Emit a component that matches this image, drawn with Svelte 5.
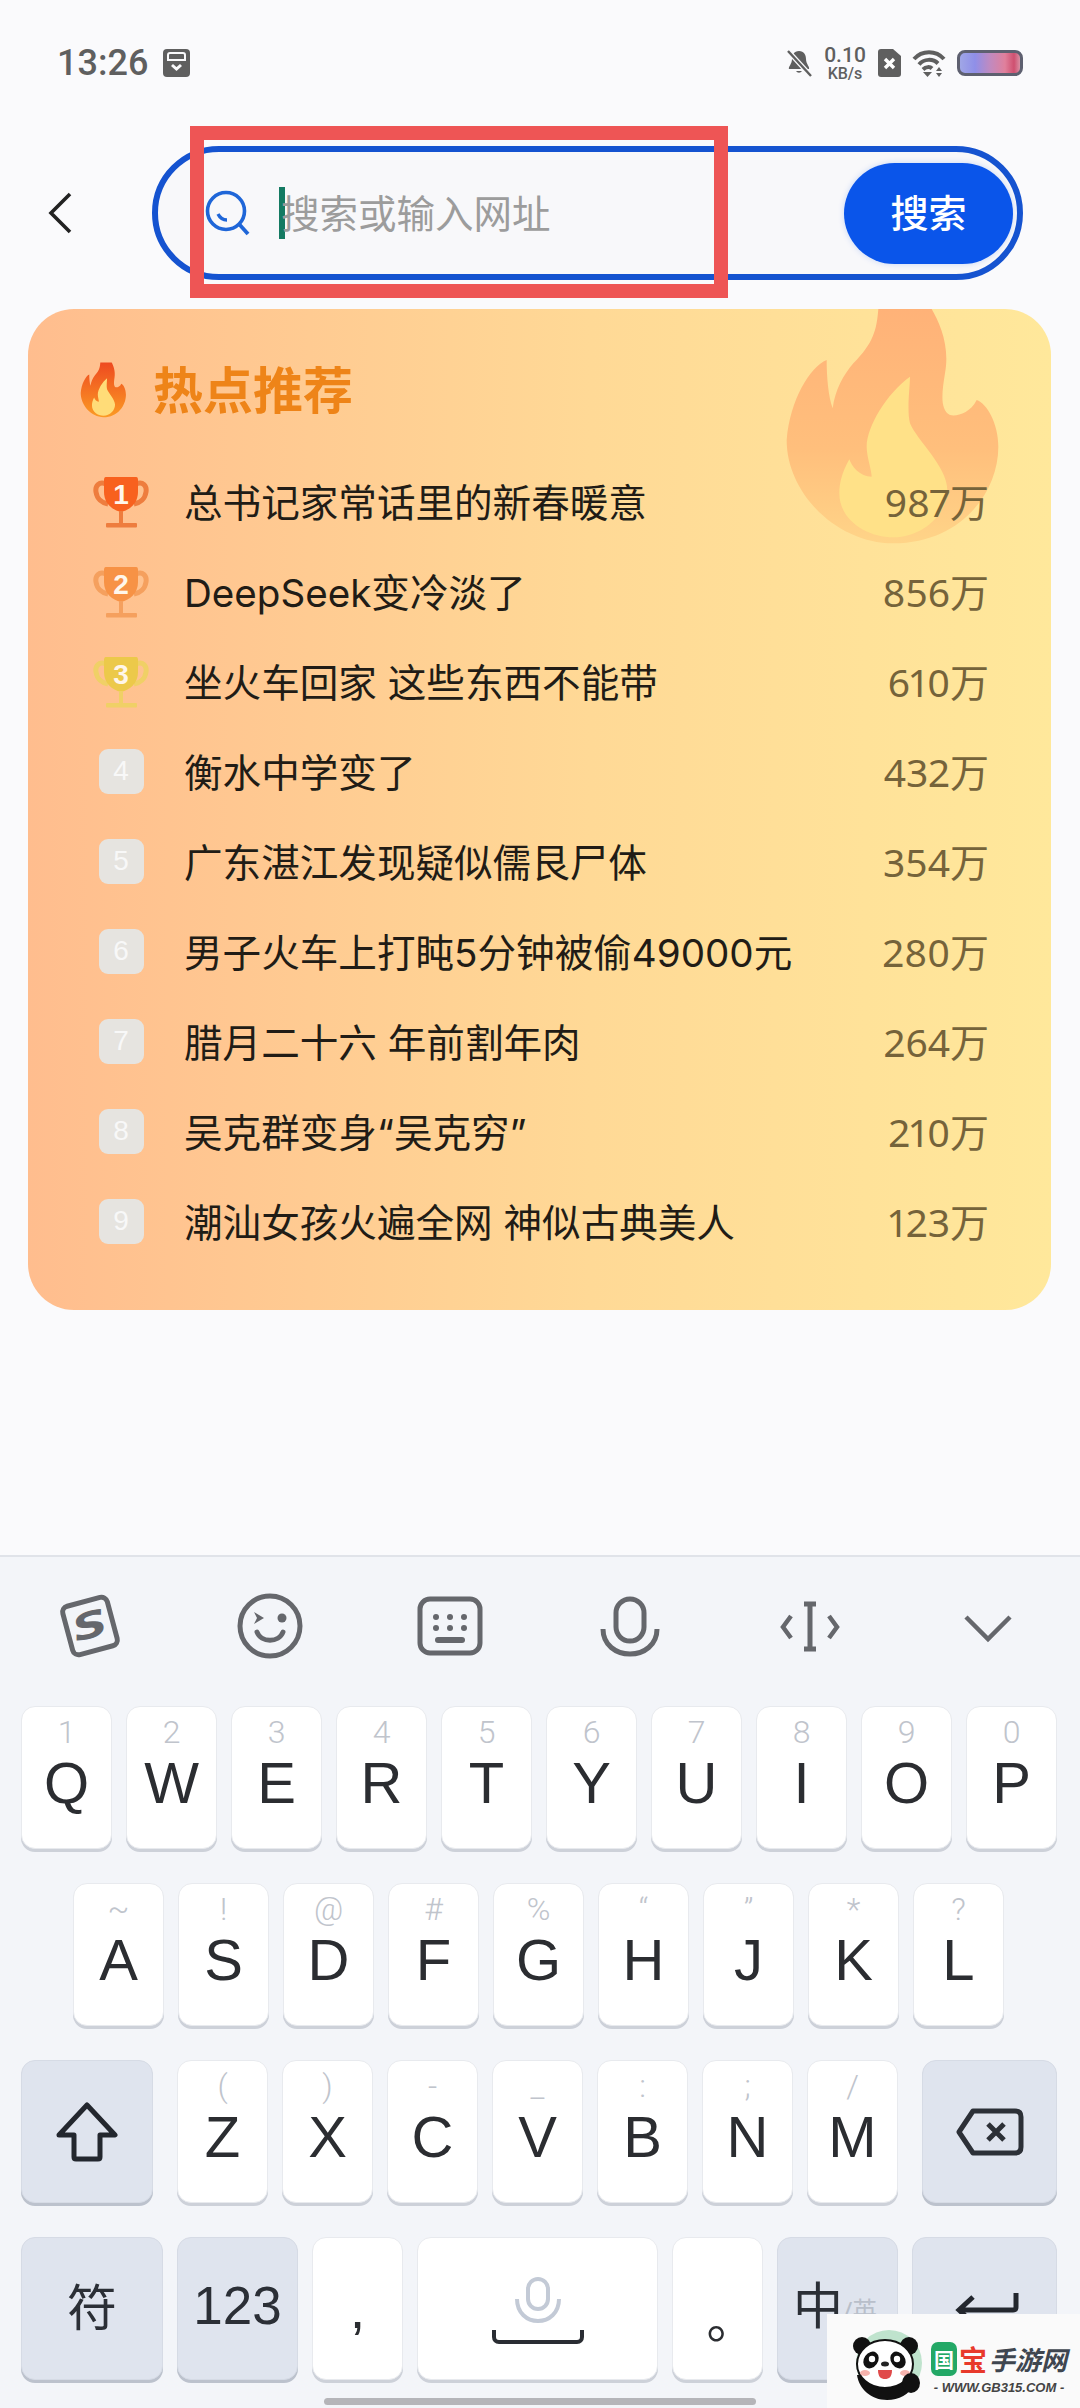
<script>
	const flameOuter = "M355 27C350 90 340 130 280 190C250 225 225 270 218 325C205 290 200 230 200 180C150 200 90 300 80 420C80 580 230 730 400 730C600 730 715 580 715 440C715 370 680 310 650 300C630 340 590 350 570 345C540 330 545 280 555 220C570 140 540 70 515 27Z";
	const flameInner = "M450 230C380 280 320 380 320 440C320 470 335 510 335 530C300 530 275 500 268 478C245 520 238 550 238 580C238 660 320 712 400 712C490 712 562 640 562 570C562 500 470 420 450 370C440 330 450 260 450 230Z";

	const news = [
		{ title: "总书记家常话里的新春暖意", count: "987万", cup: "#f8611e", handle: "#ee7d3e" },
		{ title: "DeepSeek变冷淡了", count: "856万", cup: "#f79245", handle: "#f5a05e" },
		{ title: "坐火车回家 这些东西不能带", count: "610万", cup: "#ecc94a", handle: "#f0d066" },
		{ title: "衡水中学变了", count: "432万" },
		{ title: "广东湛江发现疑似儒艮尸体", count: "354万" },
		{ title: "男子火车上打盹5分钟被偷49000元", count: "280万" },
		{ title: "腊月二十六 年前割年肉", count: "264万" },
		{ title: "吴克群变身“吴克穷”", count: "210万" },
		{ title: "潮汕女孩火遍全网 神似古典美人", count: "123万" },
	];

	const row1 = [["1","Q"],["2","W"],["3","E"],["4","R"],["5","T"],["6","Y"],["7","U"],["8","I"],["9","O"],["0","P"]];
	const row2 = [["~","A"],["!","S"],["@","D"],["#","F"],["%","G"],["“","H"],["”","J"],["*","K"],["?","L"]];
	const row3 = [["(","Z"],[")","X"],["-","C"],["_","V"],[":","B"],[";","N"],["/","M"]];
</script>

{#snippet letterKey(hint, letter)}
	<div class="key">
		<span class="hint">{hint}</span>
		<span class="letter">{letter}</span>
	</div>
{/snippet}

<div class="page">
	<header class="status">
		<div class="status-left">
			<span class="time">13:26</span>
			<svg class="st-box" viewBox="0 0 27 28">
				<path d="M4 0H23A4 4 0 0 1 27 4V24A4 4 0 0 1 23 28H4A4 4 0 0 1 0 24V4A4 4 0 0 1 4 0Z" fill="#5f5f5f" />
				<path d="M5 11V6A2 2 0 0 1 7 4H20A2 2 0 0 1 22 6V11" fill="none" stroke="#fafafc" stroke-width="2" />
				<path d="M4 11H23" stroke="#fafafc" stroke-width="2" />
				<path d="M9 16L13.5 20L18 16" fill="none" stroke="#fafafc" stroke-width="3" />
			</svg>
		</div>
		<div class="status-right">
			<svg class="st-bell" viewBox="0 0 25 27">
				<path d="M12 1C7 1 5 5 5 9C5 14 1 17 2 19H22C23 17 19 14 19 9C19 5 17 1 12 1ZM9 21A3.5 3.5 0 0 0 15 21Z" fill="#5f5f5f" />
				<path d="M1 1L24 26" stroke="#fafafc" stroke-width="5" />
				<path d="M1 1L24 26" stroke="#5f5f5f" stroke-width="2.4" />
			</svg>
			<div class="speed">
				<span class="speed-num">0.10</span>
				<span class="speed-unit">KB/s</span>
			</div>
			<svg class="st-sim" viewBox="0 0 23 28">
				<path d="M3 0H15L23 7V25A3 3 0 0 1 20 28H3A3 3 0 0 1 0 25V3A3 3 0 0 1 3 0Z" fill="#5f5f5f" />
				<path d="M7 10L16 19M16 10L7 19" stroke="#fff" stroke-width="3.400" />
			</svg>
			<svg class="st-wifi" viewBox="0 0 34 28">
				<g fill="none" stroke="#5f5f5f" stroke-width="4">
					<path d="M2 10C10 1 24 1 32 10" />
					<path d="M7 15.500C12 9.500 21 9.500 26 14.500" />
					<path d="M11 20.500C14 17.500 18 17.500 20 19.500" />
				</g>
				<path d="M11 23H20L15.500 28Z" fill="#5f5f5f" />
				<path d="M27 18L30 22H24ZM27 28L24 24H30Z" fill="#5f5f5f" />
			</svg>
			<div class="battery"></div>
		</div>
	</header>

	<div class="search-row">
		<svg class="back" viewBox="0 0 24 42">
			<path d="M22 2L3 21L22 40" fill="none" stroke="#222" stroke-width="3.600" />
		</svg>
		<div class="pill">
			<svg class="search-icon" viewBox="0 0 45 46">
				<circle cx="21" cy="21" r="18.500" fill="none" stroke="#1f66d8" stroke-width="3.600" />
				<path d="M34 34L43 44" stroke="#1f66d8" stroke-width="3.800" />
				<path d="M13 24C15 28 18 30 22 30" fill="none" stroke="#1f66d8" stroke-width="3.400" />
			</svg>
			<div class="caret"></div>
			<span class="placeholder">搜索或输入网址</span>
			<button class="search-btn"><span>搜索</span></button>
		</div>
	</div>

	<section class="card">
		<svg class="big-flame" viewBox="0 0 840 780">
			<defs>
				<linearGradient id="bf" x1="0" y1="0" x2="0" y2="1">
					<stop offset="0" stop-color="#ffb278" />
					<stop offset="0.6" stop-color="#ffbf7c" />
					<stop offset="1" stop-color="#ffd488" />
				</linearGradient>
			</defs>
			<path d={flameOuter} fill="url(#bf)" />
			<path d={flameInner} fill="#ffe188" />
		</svg>
		<div class="card-head">
			<svg class="small-flame" viewBox="70 20 660 720" preserveAspectRatio="none">
				<defs>
					<linearGradient id="fl" x1="0" y1="0" x2="0" y2="1">
						<stop offset="0" stop-color="#ee4a20" />
						<stop offset="1" stop-color="#fb9a24" />
					</linearGradient>
				</defs>
				<path d={flameOuter} fill="url(#fl)" />
				<path d={flameInner} fill="#ffdc78" />
			</svg>
			<h2>热点推荐</h2>
		</div>
		<ul class="list">
			{#each news as item, i (i)}
				<li>
					<div class="rank">
						{#if item.cup}
							<svg class="cup" viewBox="0 0 56 52">
								<path d="M13 7C6 4 2 9 3 15C4 22 9 26 15 27" fill="none" stroke={item.handle} stroke-width="5" />
								<path d="M43 7C50 4 54 9 53 15C52 22 47 26 41 27" fill="none" stroke={item.handle} stroke-width="5" />
								<path d="M13 0H43C45 0 45 2 45 4V15C45 26 37 33 28 35C19 33 11 26 11 15V4C11 2 11 0 13 0Z" fill={item.cup} />
								<path d="M26 34H30V46H26Z" fill={item.handle} />
								<rect x="13" y="46" width="31" height="4.500" rx="1" fill={item.handle} />
								<text x="28" y="27" text-anchor="middle" class="cup-num">{i + 1}</text>
							</svg>
						{:else}
							<span class="rank-box">{i + 1}</span>
						{/if}
					</div>
					<span class="title">{item.title}</span>
					<span class="count">{item.count}</span>
				</li>
			{/each}
		</ul>
	</section>

	<section class="keyboard">
		<div class="toolbar">
			<svg class="tool" viewBox="0 0 66 66">
				<g transform="rotate(-15 33 33)">
					<rect x="10" y="8" width="46" height="50" rx="6" fill="none" stroke="#65676c" stroke-width="5" />
					<text x="0" y="0" transform="translate(33 45) scale(1.35 1)" text-anchor="middle" class="logo-s">S</text>
				</g>
			</svg>
			<svg class="tool" viewBox="0 0 66 66">
				<g fill="none" stroke="#65676c">
					<circle cx="33" cy="33" r="30" stroke-width="5" />
					<path d="M20 39C24 50 42 50 46 39" stroke-width="5" stroke-linecap="round" />
				</g>
				<path d="M17 19L27 25L17 31L20 25Z" fill="#65676c" />
				<circle cx="45" cy="25" r="4.500" fill="#65676c" />
			</svg>
			<svg class="tool" viewBox="0 0 66 66">
				<rect x="3" y="6" width="60" height="54" rx="10" fill="none" stroke="#65676c" stroke-width="5" />
				<g fill="#65676c">
					<circle cx="19" cy="24" r="3" /><circle cx="33" cy="24" r="3" /><circle cx="47" cy="24" r="3" />
					<circle cx="19" cy="35" r="3" /><circle cx="33" cy="35" r="3" /><circle cx="47" cy="35" r="3" />
					<rect x="18" y="44" width="30" height="6" rx="3" />
				</g>
			</svg>
			<svg class="tool" viewBox="0 0 66 66">
				<g fill="none" stroke="#65676c" stroke-width="5">
					<rect x="19" y="6" width="28" height="42" rx="14" />
					<path d="M6 36C6 52 19 61 33 61C47 61 60 52 60 36" />
				</g>
			</svg>
			<svg class="tool" viewBox="0 0 66 66">
				<g fill="none" stroke="#65676c" stroke-width="4.500">
					<path d="M33 11V56M27 11H39M27 56H39" stroke-width="5" />
					<path d="M14 23L6 34L14 45M52 23L60 34L52 45" />
				</g>
			</svg>
			<svg class="tool" viewBox="0 0 66 66">
				<path d="M9 24L31 46L53 24" fill="none" stroke="#65676c" stroke-width="4.500" />
			</svg>
		</div>

		<div class="keys">
			<div class="row">
				{#each row1 as [h, l] (l)}
					{@render letterKey(h, l)}
				{/each}
			</div>
			<div class="row row-home">
				{#each row2 as [h, l] (l)}
					{@render letterKey(h, l)}
				{/each}
			</div>
			<div class="row">
				<div class="key fn shift">
					<svg class="shift-icon" viewBox="0 0 62 60">
						<path d="M31 3L59 33H44V55C44 57 43 57 42 57H20C19 57 18 57 18 55V33H3Z" fill="none" stroke="#23272e" stroke-width="5" stroke-linejoin="round" />
					</svg>
				</div>
				<div class="mid">
					{#each row3 as [h, l] (l)}
						{@render letterKey(h, l)}
					{/each}
				</div>
				<div class="key fn backspace">
					<svg class="bs-icon" viewBox="0 0 68 48">
						<path d="M17 3H59C63 3 65 5 65 9V39C65 43 63 45 59 45H17L3 24Z" fill="none" stroke="#2c3037" stroke-width="5" stroke-linejoin="round" />
						<path d="M32 16L48 32M48 16L32 32" stroke="#2c3037" stroke-width="5" />
					</svg>
				</div>
			</div>
			<div class="row">
				<div class="key fn w-fu"><span class="cjk">符</span></div>
				<div class="key fn w-num"><span class="num">123</span></div>
				<div class="key"><span class="comma">,</span></div>
				<div class="key w-space">
					<svg class="space-mic" viewBox="0 0 46 46">
						<g fill="none" stroke="#c3cad6" stroke-width="4">
							<rect x="13" y="2" width="20" height="30" rx="10" />
							<path d="M2 22C2 36 12 44 23 44C34 44 44 36 44 22" />
						</g>
					</svg>
					<svg class="space-bar" viewBox="0 0 92 14">
						<path d="M2 0V7C2 10 4 12 7 12H85C88 12 90 10 90 7V0" fill="none" stroke="#2a2d33" stroke-width="4" />
					</svg>
				</div>
				<div class="key"><span class="stop">。</span></div>
				<div class="key fn w-lang"><span class="cjk">中</span><span class="en">/英</span></div>
				<div class="key fn w-enter">
					<svg class="enter-icon" viewBox="0 0 64 44">
						<path d="M61 2V16C61 18 60 19 58 19H6M18 6L4 19L18 32" fill="none" stroke="#23272e" stroke-width="5" />
					</svg>
				</div>
			</div>
		</div>
		<div class="home-bar"></div>
	</section>

	<div class="annotation"></div>

	<aside class="watermark">
		<svg class="panda" viewBox="0 0 76 72">
			<circle cx="40" cy="34" r="33" fill="#bfe3cd" />
			<circle cx="13" cy="17" r="9" fill="#111" />
			<circle cx="60" cy="17" r="9" fill="#111" />
			<path d="M8 46C10 60 22 71 38 71C50 71 60 66 66 54L62 46Z" fill="#111" />
			<ellipse cx="36" cy="35" rx="28" ry="24" fill="#fff" stroke="#111" stroke-width="2" />
			<ellipse cx="22" cy="31" rx="7" ry="9" fill="#111" transform="rotate(35 22 31)" />
			<ellipse cx="49" cy="31" rx="7" ry="9" fill="#111" transform="rotate(-35 49 31)" />
			<circle cx="23" cy="30" r="3.200" fill="#fff" />
			<circle cx="48" cy="30" r="3.200" fill="#fff" />
			<ellipse cx="36" cy="35" rx="4" ry="2.500" fill="#222" />
			<path d="M29 41H43C43 48 40 50 36 50C32 50 29 48 29 41Z" fill="#e04a4a" />
			<ellipse cx="16" cy="44" rx="5" ry="3" fill="#f6b3ad" />
			<ellipse cx="56" cy="44" rx="5" ry="3" fill="#f6b3ad" />
			<ellipse cx="62" cy="54" rx="9" ry="10" fill="#111" />
		</svg>
		<div class="wm-text">
			<div class="wm-name">
				<span class="wm-guo">国</span>
				<span class="wm-bao">宝</span>
				<span class="wm-rest">手游网</span>
			</div>
			<div class="wm-url">- WWW.GB315.COM -</div>
		</div>
	</aside>
</div>

<style>
	:global(body) {
		margin: 0;
		background: #fafafc;
	}

	.page {
		position: relative;
		width: 1080px;
		height: 2408px;
		overflow: hidden;
		display: flex;
		flex-direction: column;
		background: #fafafc;
		font-family: "Noto Sans", "Noto Sans CJK SC", sans-serif;
	}

	.status {
		height: 126px;
		margin-bottom: 20px;
		flex: none;
		display: flex;
		align-items: center;
		justify-content: space-between;
		padding: 0 57px;
		box-sizing: border-box;
	}

	.status-left,
	.status-right {
		display: flex;
		align-items: center;
	}

	.time {
		font-family: Roboto, sans-serif;
		font-size: 36px;
		font-weight: 500;
		color: #5f5f5f;
		width: 106px;
	}

	.st-box {
		width: 27px;
		height: 28px;
	}

	.st-bell {
		width: 25px;
		height: 27px;
		margin-right: 12px;
	}

	.speed {
		display: flex;
		flex-direction: column;
		align-items: center;
		font-family: Roboto, sans-serif;
		font-weight: 500;
		color: #5f5f5f;
		width: 42px;
		margin-right: 12px;
	}

	.speed-num {
		font-size: 21px;
		line-height: 20px;
	}

	.speed-unit {
		font-size: 16px;
		line-height: 17px;
	}

	.st-sim {
		width: 23px;
		height: 28px;
		margin-right: 11px;
	}

	.st-wifi {
		width: 34px;
		height: 28px;
		margin-right: 11px;
	}

	.battery {
		width: 66px;
		height: 26px;
		box-sizing: border-box;
		border: 3px solid #5e6070;
		border-radius: 8px;
		background: linear-gradient(90deg, #a0a6e6 0%, #8f8fe8 25%, #c08ac0 50%, #e0809c 75%, #cf5070 90%, #d890a4 100%);
	}

	.search-row {
		height: 134px;
		flex: none;
		display: flex;
		align-items: center;
		padding-left: 48px;
	}

	.back {
		width: 24px;
		height: 42px;
		margin-right: 80px;
	}

	.pill {
		width: 871px;
		height: 134px;
		box-sizing: border-box;
		border: 6px solid #1553d0;
		border-radius: 67px;
		background: #f8f8fa;
		display: flex;
		align-items: center;
		padding: 0 4px 0 47px;
	}

	.search-icon {
		width: 45px;
		height: 46px;
		margin-right: 29px;
	}

	.caret {
		width: 6px;
		height: 52px;
		background: #147a62;
		margin-right: -4px;
	}

	.placeholder {
		font-size: 38.5px;
		color: #9c9c9c;
		flex: 1;
		padding-bottom: 5px;
	}

	.search-btn {
		width: 169px;
		height: 101px;
		border: none;
		border-radius: 51px;
		background: #0a55ea;
		color: #fff;
		font-family: inherit;
		font-size: 38px;
		font-weight: 500;
		padding: 0 0 5px;
		box-shadow: 0 0 6px rgba(10, 85, 234, 0.2);
	}

	.card {
		position: relative;
		margin: 29px 29px 0 28px;
		height: 1001px;
		flex: none;
		box-sizing: border-box;
		padding-top: 53px;
		border-radius: 46px;
		overflow: hidden;
		background: linear-gradient(90deg, #ffbd8e 0%, #ffd996 55%, #ffe89b 100%);
	}

	.big-flame {
		position: absolute;
		left: 732px;
		top: -9px;
		width: 280px;
		height: 260px;
	}

	.card-head {
		position: relative;
		display: flex;
		align-items: center;
		height: 56px;
		padding-left: 52px;
		margin-bottom: 40px;
	}

	.small-flame {
		width: 47px;
		height: 56px;
		margin-right: 26px;
	}

	h2 {
		margin: 0 0 6px;
		font-size: 50px;
		font-weight: 700;
		color: #ee8418;
	}

	.list {
		position: relative;
		list-style: none;
		margin: 0;
		padding: 0 62px 0 65px;
	}

	li {
		height: 90px;
		display: flex;
		align-items: center;
	}

	.rank {
		width: 56px;
		margin-right: 35px;
		flex: none;
		display: flex;
		justify-content: center;
	}

	.cup {
		width: 56px;
		height: 52px;
	}

	.cup-num {
		font-family: "Liberation Sans", sans-serif;
		font-size: 28px;
		font-weight: 700;
		fill: #fff6ea;
	}

	.rank-box {
		width: 45px;
		height: 45px;
		margin-bottom: 4px;
		border-radius: 9px;
		background: #e6e4e0;
		color: #f8f8f8;
		font-family: "Liberation Sans", sans-serif;
		font-size: 28px;
		display: flex;
		align-items: center;
		justify-content: center;
	}

	.title {
		flex: 1;
		font-family: Inter, "Noto Sans CJK SC", sans-serif;
		font-size: 38.6px;
		color: #211c16;
		white-space: nowrap;
		padding-bottom: 6px;
	}

	.count {
		font-size: 39px;
		font-variant-numeric: proportional-nums;
		color: #75633a;
		padding-bottom: 6px;
	}

	.keyboard {
		margin-top: auto;
		height: 853px;
		flex: none;
		box-sizing: border-box;
		border-top: 2px solid #e0e3e9;
		background: #f3f5f9;
		display: flex;
		flex-direction: column;
	}

	.toolbar {
		height: 138px;
		flex: none;
		display: grid;
		grid-template-columns: repeat(6, 180px);
		justify-items: center;
		align-items: center;
	}

	.tool {
		width: 66px;
		height: 66px;
	}

	.logo-s {
		font-family: "DejaVu Sans", sans-serif;
		font-size: 36px;
		font-weight: 700;
		font-style: italic;
		fill: #65676c;
	}

	.keys {
		padding: 11px 23px 0 21px;
		display: flex;
		flex-direction: column;
		gap: 34px;
	}

	.row {
		display: flex;
		gap: 14px;
		height: 143px;
	}

	.row-home {
		padding-left: 52px;
	}

	.mid {
		display: flex;
		gap: 14px;
		margin: 0 10px;
	}

	.key {
		width: 91px;
		height: 143px;
		flex: none;
		box-sizing: border-box;
		border: 1px solid #e8eaee;
		border-radius: 14px;
		background: #fff;
		box-shadow: 0 3px 0 #cdd1d9;
		display: flex;
		flex-direction: column;
		align-items: center;
		justify-content: center;
	}

	.key:has(.hint) {
		justify-content: flex-start;
	}

	.hint {
		height: 50px;
		line-height: 50px;
		font-family: Roboto, sans-serif;
		font-weight: 300;
		font-size: 32px;
		color: #c0c4cc;
	}

	.letter {
		height: 52px;
		line-height: 52px;
		font-family: "Liberation Sans", sans-serif;
		font-size: 58px;
		color: #2b2d31;
	}

	.fn {
		background: #dfe4ee;
		border-color: #d6dbe5;
		box-shadow: 0 3px 0 #bcc2cd;
	}

	.shift {
		width: 132px;
	}

	.backspace {
		width: 135px;
	}

	.shift-icon {
		width: 62px;
		height: 60px;
	}

	.bs-icon {
		width: 68px;
		height: 48px;
	}

	.w-fu {
		width: 142px;
		padding-bottom: 8px;
	}

	.w-num {
		width: 121px;
		padding-bottom: 6px;
	}

	.w-space {
		width: 241px;
		padding-top: 4px;
	}

	.w-lang {
		width: 121px;
		flex-direction: row;
		justify-content: flex-start;
		padding: 0 0 12px 15px;
	}

	.w-enter {
		width: 145px;
		padding: 8px 0 0 4px;
	}

	.cjk {
		font-size: 50px;
		color: #2b2f36;
	}

	.en {
		font-size: 25px;
		color: #b8bfca;
		margin-top: 12px;
	}

	.num {
		font-family: "Liberation Sans", sans-serif;
		font-size: 53px;
		color: #2b2f36;
	}

	.comma {
		font-family: "Liberation Sans", sans-serif;
		font-size: 56px;
		color: #2b2d31;
	}

	.stop {
		font-size: 50px;
		color: #2b2d31;
		margin: 16px 0 0 28px;
	}

	.space-mic {
		width: 46px;
		height: 46px;
		margin-bottom: 7px;
	}

	.space-bar {
		width: 92px;
		height: 14px;
	}

	.enter-icon {
		width: 64px;
		height: 44px;
	}

	.home-bar {
		width: 432px;
		height: 7px;
		margin: 18px auto 0;
		border-radius: 4px;
		background: #b5b5b9;
	}

	.annotation {
		position: absolute;
		left: 190px;
		top: 126px;
		width: 538px;
		height: 172px;
		box-sizing: border-box;
		border: 14px solid #ee5555;
	}

	.watermark {
		position: absolute;
		right: 0;
		bottom: 0;
		width: 253px;
		height: 94px;
		background: #fafafa;
		display: flex;
	}

	.panda {
		width: 76px;
		height: 72px;
		margin: 15px 6px 0 22px;
	}

	.wm-text {
		padding-top: 27px;
	}

	.wm-name {
		display: flex;
		align-items: center;
		height: 36px;
	}

	.wm-guo {
		width: 26px;
		height: 34px;
		border-radius: 7px;
		background: #23a866;
		color: #fff;
		font-size: 20px;
		font-weight: 700;
		display: flex;
		align-items: center;
		justify-content: center;
		margin-right: 2px;
	}

	.wm-bao {
		font-size: 28px;
		font-weight: 700;
		color: #e8392b;
		margin-right: 2px;
	}

	.wm-rest {
		font-size: 26px;
		font-weight: 700;
		font-style: italic;
		color: #3f4650;
		white-space: nowrap;
	}

	.wm-url {
		font-family: "Liberation Sans", sans-serif;
		font-size: 13px;
		font-weight: 700;
		font-style: italic;
		color: #444;
		text-align: center;
		margin-top: 3px;
		white-space: nowrap;
	}
</style>
